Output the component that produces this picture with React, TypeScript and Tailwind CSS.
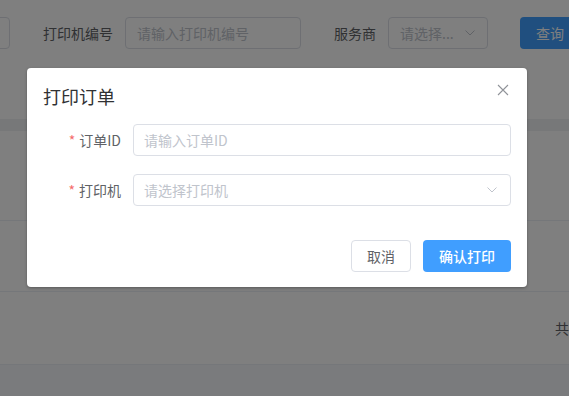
import React from 'react';

const ChevronDown: React.FC<{ className?: string }> = ({ className }) => (
    <svg viewBox="0 0 10 6" className={className} fill="none" stroke="currentColor" strokeWidth="1">
        <path d="M0.5 0.5 L5 5 L9.5 0.5" />
    </svg>
);

const FilterBar: React.FC = () => (
    <div className="flex items-center pt-[17px] ml-[-150px] text-[14px]">
        <div className="w-[160px] h-8 shrink-0 border border-[#dcdfe6] rounded bg-white" />
        <span className="ml-[33px] w-[70px] shrink-0 text-[#606266] leading-8">打印机编号</span>
        <div className="ml-[12px] w-[176px] h-8 shrink-0 border border-[#dcdfe6] rounded bg-white px-[11px] leading-[30px] text-[#c0c4cc]">
            请输入打印机编号
        </div>
        <span className="ml-[33px] w-[42px] shrink-0 text-[#606266] leading-8">服务商</span>
        <div className="ml-[12px] w-[100px] h-8 shrink-0 border border-[#dcdfe6] rounded bg-white pl-[11px] pr-[12px] flex items-center justify-between text-[#c0c4cc]">
            <span>请选择...</span>
            <ChevronDown className="w-[10px] h-[6px]" />
        </div>
        <button className="ml-[32px] w-[60px] h-8 shrink-0 rounded bg-[#409eff] text-white">查询</button>
    </div>
);

const PrintOrderDialog: React.FC = () => (
    <div className="relative w-[500px] bg-white rounded-[4px] shadow-[0_1px_3px_rgba(0,0,0,0.3)]">
        <div className="px-4 pt-4">
            <h2 className="text-[18px] leading-[24px] text-[#303133]">打印订单</h2>
        </div>
        <button className="absolute top-[16px] right-[18px] w-3 h-3 text-[#909399]" aria-label="关闭">
            <svg viewBox="0 0 12 12" className="w-3 h-3" fill="none" stroke="currentColor" strokeWidth="1.1">
                <path d="M1 1 L11 11 M11 1 L1 11" />
            </svg>
        </button>

        <div className="px-4 pt-4 text-[14px]">
            <div className="flex items-center">
                <label className="w-[90px] shrink-0 pr-3 text-right text-[#606266] leading-8">
                    <span className="text-[#f56c6c] mr-1">*</span>订单ID
                </label>
                <input
                    className="flex-1 h-8 border border-[#dcdfe6] rounded px-[10px] text-[#606266] placeholder:text-[#c0c4cc] outline-none"
                    placeholder="请输入订单ID"
                />
            </div>
            <div className="flex items-center mt-[18px]">
                <label className="w-[90px] shrink-0 pr-3 text-right text-[#606266] leading-8">
                    <span className="text-[#f56c6c] mr-1">*</span>打印机
                </label>
                <div className="flex-1 h-8 border border-[#dcdfe6] rounded pl-[10px] pr-[13px] flex items-center justify-between text-[#c0c4cc]">
                    <span>请选择打印机</span>
                    <ChevronDown className="w-[10px] h-[6px]" />
                </div>
            </div>
        </div>

        <div className="flex justify-end gap-3 px-4 pt-[34px] pb-[15px] text-[14px]">
            <button className="w-[60px] h-8 border border-[#dcdfe6] rounded bg-white text-[#606266]">取消</button>
            <button className="w-[88px] h-8 rounded bg-[#409eff] text-white font-medium">确认打印</button>
        </div>
    </div>
);

export default function App() {
    return (
        <div className="relative w-[569px] h-[396px] overflow-hidden bg-[#f5f7fa] font-['Noto_Sans_CJK_SC',sans-serif]">
            <div className="h-[119px] bg-white">
                <FilterBar />
            </div>
            <div className="h-[12px] bg-[#eef0f3]" />
            <div className="bg-white">
                <div className="h-[90px] border-b border-[#ebeef5]" />
                <div className="h-[71px] border-b border-[#ebeef5]" />
                <div className="h-[73px] border-b border-[#ebeef5] flex items-center justify-end">
                    <span className="text-[14px] text-[#606266] mr-[-6px] w-[20px]">共</span>
                </div>
            </div>

            <div className="absolute inset-0 bg-black/50 flex justify-start items-start pl-[27px] pt-[68px]">
                <PrintOrderDialog />
            </div>
        </div>
    );
}
